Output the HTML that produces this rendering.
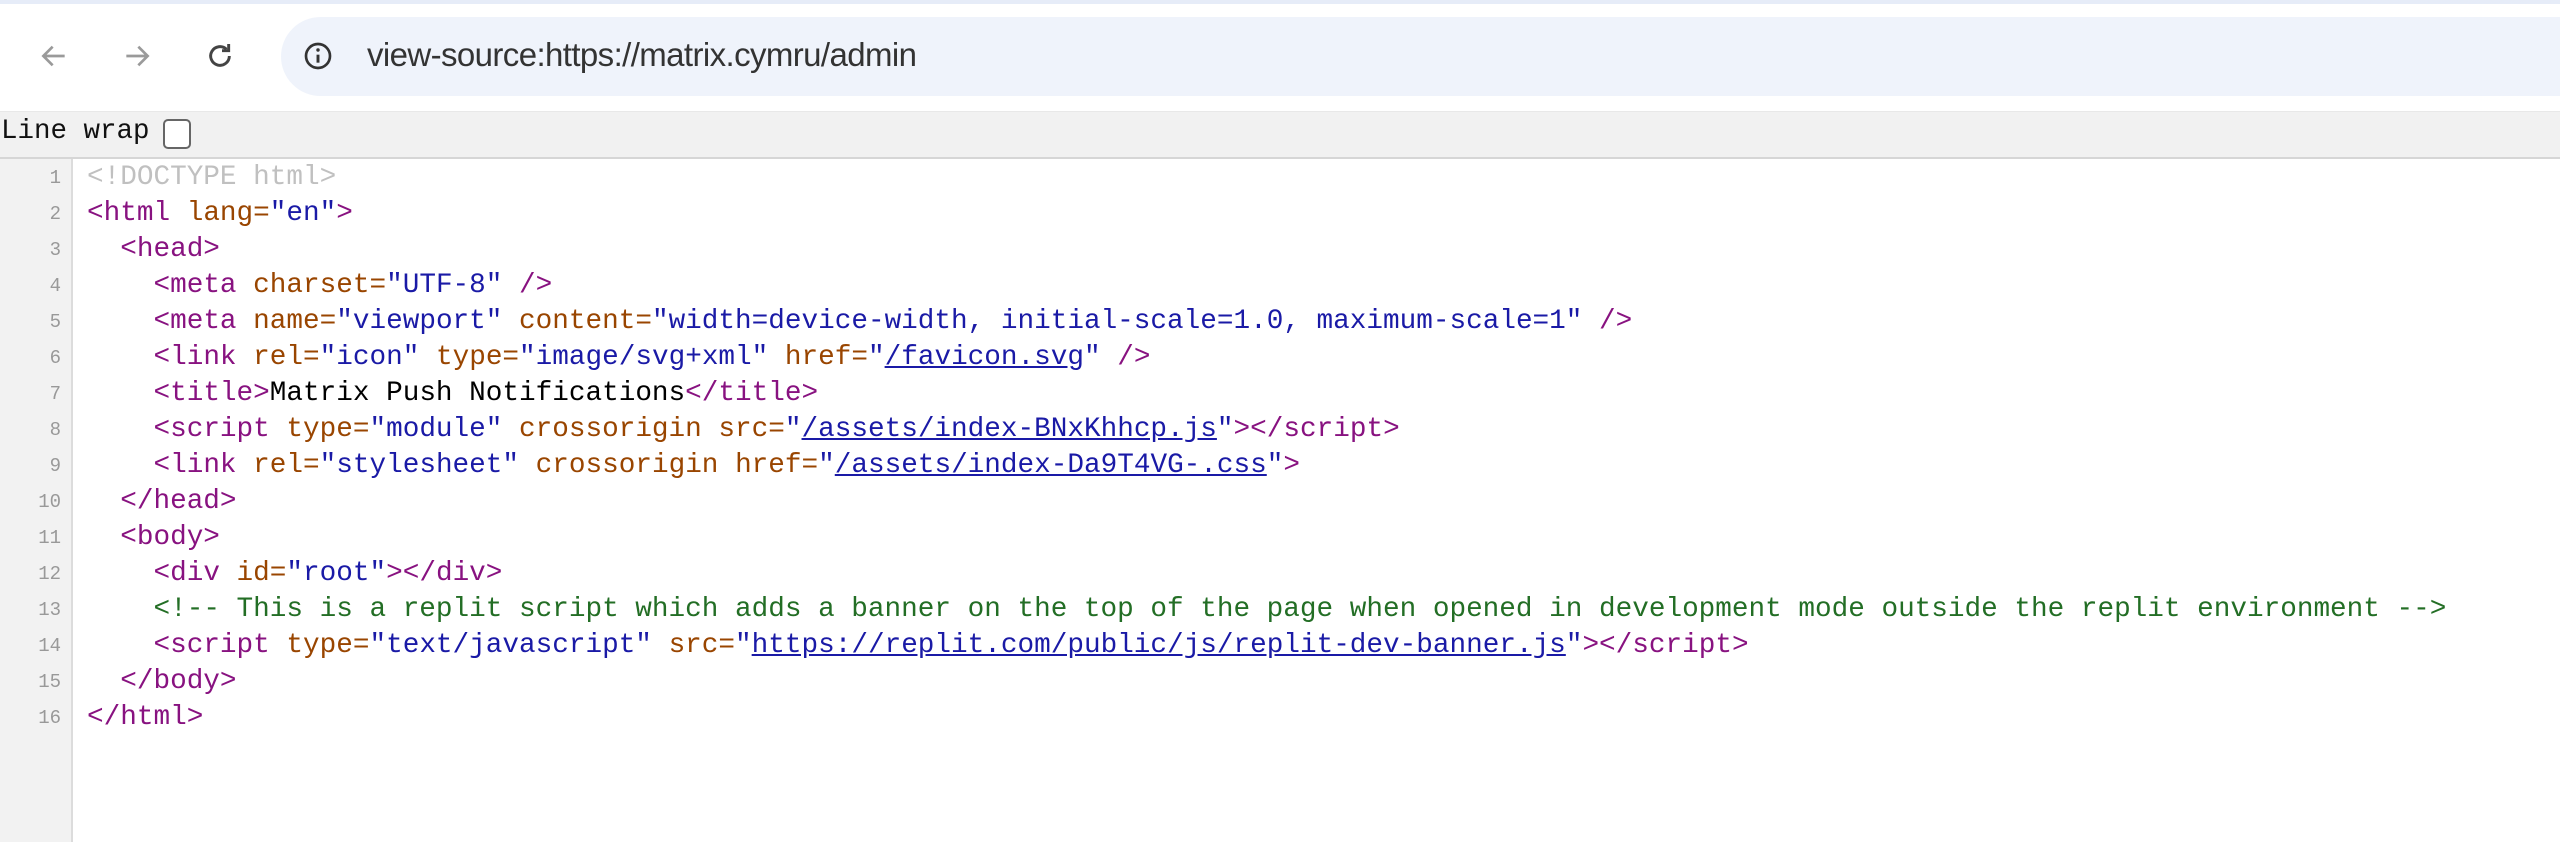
<!DOCTYPE html>
<html><head><style>
body{margin:0;width:2560px;height:842px;overflow:hidden;background:#fff;font-family:"Liberation Sans",sans-serif;position:relative}
.top{position:absolute;left:0;top:0;width:2560px;height:4px;background:#e6ecf8}
.addr{position:absolute;left:281px;top:17px;right:0;height:79px;background:#eff3fb;border-radius:40px 0 0 40px}
.url{position:absolute;left:367px;top:36px;font-size:33px;color:#333;letter-spacing:-0.6px}
.ic{position:absolute}
.bar{position:absolute;left:0;top:111px;width:2560px;height:45px;background:#f1f1f1;border-top:1px solid #e8e8e8;border-bottom:2px solid #d6d6d6}
.lw{position:absolute;left:1px;top:116px;font-family:"Liberation Mono",monospace;font-size:27.5px;color:#111}
.cb{position:absolute;left:163px;top:119px;width:24px;height:26px;border:2px solid #666;border-radius:5px;background:#fff}
.gut{position:absolute;left:0;top:159px;width:71px;height:683px;background:#f2f2f2;border-right:2px solid #dcdcdc}
.code{position:absolute;left:0;top:160px;font-family:"Liberation Mono",monospace;font-size:27.7px}
.l{height:36px;line-height:36px;white-space:pre;position:relative}
.n{position:absolute;left:0;width:61px;text-align:right;font-size:19px;color:#999}
.t{position:absolute;left:87px}
.g{color:#c0c0c0}.tg{color:#881280}.a{color:#994500}.v{color:#1a1aa6}.c{color:#236e25}
a{color:#1a1aa6;text-decoration:underline}
</style></head><body>
<div class="top"></div>
<svg class="ic" style="left:38px;top:40px" width="32" height="32" viewBox="0 0 24 24"><path d="M20 12H5M11 5l-7 7 7 7" fill="none" stroke="#9a9a9a" stroke-width="2"/></svg>
<svg class="ic" style="left:121px;top:40px" width="32" height="32" viewBox="0 0 24 24"><path d="M4 12h15M13 5l7 7-7 7" fill="none" stroke="#9a9a9a" stroke-width="2"/></svg>
<svg class="ic" style="left:204px;top:40px" width="32" height="32" viewBox="0 0 24 24"><path d="M19 12a7 7 0 1 1-2.1-5" fill="none" stroke="#444" stroke-width="2.2"/><path d="M18.5 3v5h-5" fill="none" stroke="#444" stroke-width="2.2"/></svg>
<div class="addr"></div>
<svg class="ic" style="left:302px;top:40px" width="32" height="32" viewBox="0 0 24 24"><circle cx="12" cy="12" r="9" fill="none" stroke="#333" stroke-width="2"/><path d="M12 11v6" stroke="#333" stroke-width="2.2"/><circle cx="12" cy="7.5" r="1.3" fill="#333"/></svg>
<div class="url">view-source:https://matrix.cymru/admin</div>
<div class="bar"></div>
<div class="lw">Line wrap</div><div class="cb"></div>
<div class="gut"></div>
<div class="code">
<div class="l"><span class="n">1</span><span class="t g">&lt;!DOCTYPE html&gt;</span></div>
<div class="l"><span class="n">2</span><span class="t"><span class="tg">&lt;html </span><span class="a">lang=</span><span class="v">"en"</span><span class="tg">&gt;</span></span></div>
<div class="l"><span class="n">3</span><span class="t">  <span class="tg">&lt;head&gt;</span></span></div>
<div class="l"><span class="n">4</span><span class="t">    <span class="tg">&lt;meta </span><span class="a">charset=</span><span class="v">"UTF-8"</span><span class="tg"> /&gt;</span></span></div>
<div class="l"><span class="n">5</span><span class="t">    <span class="tg">&lt;meta </span><span class="a">name=</span><span class="v">"viewport"</span> <span class="a">content=</span><span class="v">"width=device-width, initial-scale=1.0, maximum-scale=1"</span><span class="tg"> /&gt;</span></span></div>
<div class="l"><span class="n">6</span><span class="t">    <span class="tg">&lt;link </span><span class="a">rel=</span><span class="v">"icon"</span> <span class="a">type=</span><span class="v">"image/svg+xml"</span> <span class="a">href=</span><span class="v">"<a>/favicon.svg</a>"</span><span class="tg"> /&gt;</span></span></div>
<div class="l"><span class="n">7</span><span class="t">    <span class="tg">&lt;title&gt;</span>Matrix Push Notifications<span class="tg">&lt;/title&gt;</span></span></div>
<div class="l"><span class="n">8</span><span class="t">    <span class="tg">&lt;script </span><span class="a">type=</span><span class="v">"module"</span> <span class="a">crossorigin</span> <span class="a">src=</span><span class="v">"<a>/assets/index-BNxKhhcp.js</a>"</span><span class="tg">&gt;&lt;/script&gt;</span></span></div>
<div class="l"><span class="n">9</span><span class="t">    <span class="tg">&lt;link </span><span class="a">rel=</span><span class="v">"stylesheet"</span> <span class="a">crossorigin</span> <span class="a">href=</span><span class="v">"<a>/assets/index-Da9T4VG-.css</a>"</span><span class="tg">&gt;</span></span></div>
<div class="l"><span class="n">10</span><span class="t">  <span class="tg">&lt;/head&gt;</span></span></div>
<div class="l"><span class="n">11</span><span class="t">  <span class="tg">&lt;body&gt;</span></span></div>
<div class="l"><span class="n">12</span><span class="t">    <span class="tg">&lt;div </span><span class="a">id=</span><span class="v">"root"</span><span class="tg">&gt;&lt;/div&gt;</span></span></div>
<div class="l"><span class="n">13</span><span class="t">    <span class="c">&lt;!-- This is a replit script which adds a banner on the top of the page when opened in development mode outside the replit environment --&gt;</span></span></div>
<div class="l"><span class="n">14</span><span class="t">    <span class="tg">&lt;script </span><span class="a">type=</span><span class="v">"text/javascript"</span> <span class="a">src=</span><span class="v">"<a>https://replit.com/public/js/replit-dev-banner.js</a>"</span><span class="tg">&gt;&lt;/script&gt;</span></span></div>
<div class="l"><span class="n">15</span><span class="t">  <span class="tg">&lt;/body&gt;</span></span></div>
<div class="l"><span class="n">16</span><span class="t"><span class="tg">&lt;/html&gt;</span></span></div>
</div>
</body></html>
